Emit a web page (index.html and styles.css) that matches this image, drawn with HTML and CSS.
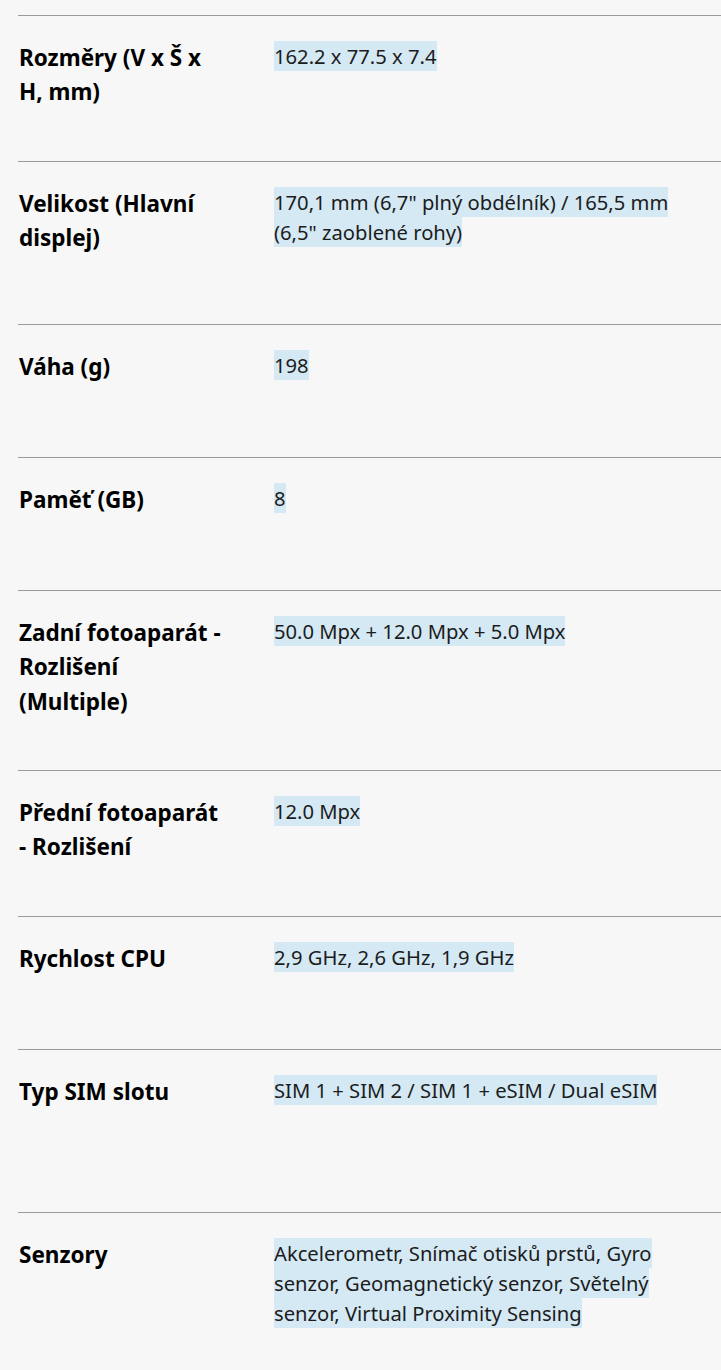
FILE: index.html
```html
<!DOCTYPE html>
<html lang="cs">
<head>
<meta charset="utf-8">
<title>Specifikace</title>
<link rel="stylesheet" href="styles.css">
</head>
<body>
<div class="specs">
  <div class="row">
    <div class="label">Rozměry (V x Š x<br>H, mm)</div>
    <div class="value"><span class="hl">162.2 x 77.5 x 7.4</span></div>
  </div>
  <div class="row">
    <div class="label">Velikost (Hlavní<br>displej)</div>
    <div class="value"><span class="hl">170,1 mm (6,7" plný obdélník) / 165,5 mm (6,5" zaoblené rohy)</span></div>
  </div>
  <div class="row">
    <div class="label">Váha (g)</div>
    <div class="value"><span class="hl">198</span></div>
  </div>
  <div class="row">
    <div class="label">Paměť (GB)</div>
    <div class="value"><span class="hl">8</span></div>
  </div>
  <div class="row">
    <div class="label">Zadní fotoaparát -<br>Rozlišení<br>(Multiple)</div>
    <div class="value"><span class="hl">50.0 Mpx + 12.0 Mpx + 5.0 Mpx</span></div>
  </div>
  <div class="row">
    <div class="label">Přední fotoaparát<br>- Rozlišení</div>
    <div class="value"><span class="hl">12.0 Mpx</span></div>
  </div>
  <div class="row">
    <div class="label">Rychlost CPU</div>
    <div class="value"><span class="hl">2,9 GHz, 2,6 GHz, 1,9 GHz</span></div>
  </div>
  <div class="row">
    <div class="label">Typ SIM slotu</div>
    <div class="value value--extra"><span class="hl">SIM 1 + SIM 2 / SIM 1 + eSIM / Dual eSIM</span></div>
  </div>
  <div class="row">
    <div class="label">Senzory</div>
    <div class="value"><span class="hl">Akcelerometr, Snímač otisků prstů, Gyro senzor, Geomagnetický senzor, Světelný senzor, Virtual Proximity Sensing</span></div>
  </div>
</div>
</body>
</html>
```
FILE: styles.css
```css
html, body {
  margin: 0;
  padding: 0;
  background: #f7f7f7;
}

body {
  font-family: "Noto Sans", "Open Sans", sans-serif;
  color: #1c1c1c;
}

.specs {
  padding-top: 15px;
  margin-left: 18px;
}

.row {
  display: grid;
  grid-template-columns: 256px 1fr;
  align-items: start;
  border-top: 1px solid #9a9a9a;
  padding: 25px 0 51px;
}

.label {
  font-weight: 700;
  font-size: 22.5px;
  line-height: 34.4px;
  color: #000;
  padding-left: 1px;
}

.value {
  font-size: 20.2px;
  line-height: 30px;
  padding-right: 27px;
  margin-bottom: 26px;
}

.value--extra {
  padding-bottom: 30px;
}

.hl {
  background: #d4e9f4;
  padding: 1.3px 0;
  -webkit-box-decoration-break: clone;
  box-decoration-break: clone;
}
```
